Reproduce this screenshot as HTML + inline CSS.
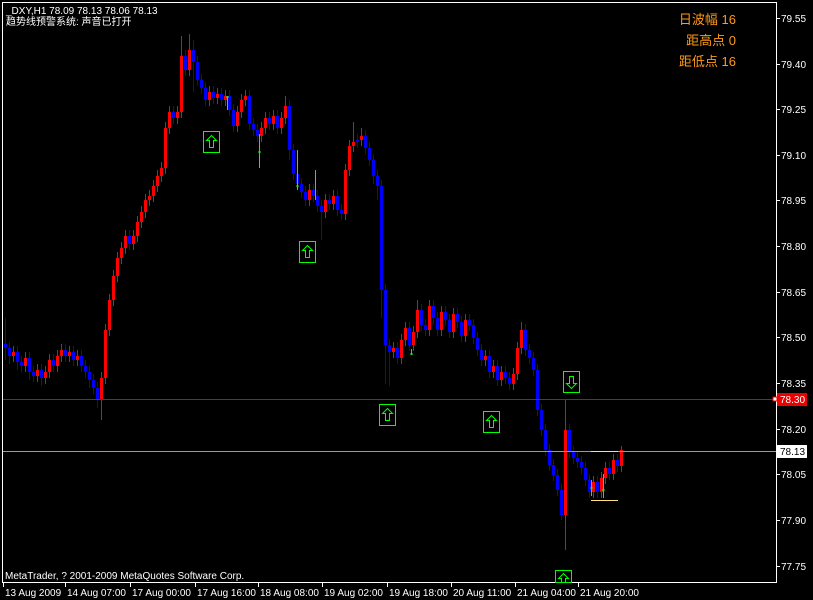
<!DOCTYPE html>
<html><head><meta charset="utf-8"><style>
html,body{margin:0;padding:0;background:#000;width:813px;height:600px;overflow:hidden}
svg{display:block}
text{font-family:"Liberation Sans","Noto Sans CJK SC",sans-serif}
</style></head><body>
<svg width="813" height="600" xmlns="http://www.w3.org/2000/svg">
<rect width="813" height="600" fill="#000"/>
<path fill="none" stroke="#f00" d="M13.5 346V362M25.5 352V372M37.5 364V382M45.5 366V384M49.5 354V378M57.5 350V372M61.5 344V362M69.5 346V362M77.5 350V366M101.5 372V420M105.5 324V384M109.5 294V336M113.5 270V306M117.5 252V282M121.5 242V264M125.5 230V254M133.5 230V250M137.5 216V242M141.5 206V228M145.5 194V218M149.5 190V206M153.5 180V202M157.5 170V192M161.5 162V182M165.5 122V174M169.5 106V134M177.5 106V124M181.5 36V118M189.5 34V76M209.5 86V106M217.5 88V104M225.5 90V106M237.5 106V132M241.5 94V118M245.5 90V106M261.5 122V142M265.5 112V134M273.5 110V130M281.5 112V134M285.5 96V124M309.5 184V206M325.5 194V218M333.5 190V210M345.5 164V220M349.5 140V176M353.5 122V152M361.5 128V146M393.5 342V358M401.5 334V364M405.5 322V346M413.5 326V351M417.5 300V338M429.5 300V336M441.5 306V336M453.5 308V338M465.5 314V342M485.5 350V366M493.5 360V378M501.5 366V386M513.5 368V390M517.5 342V380M521.5 322V354M565.5 400V550M593.5 476V498M601.5 472V498M605.5 462V484M613.5 454V480M621.5 446V472"/>
<path fill="#f00" d="M12 352h3v4h-3zM24 358h3v8h-3zM36 370h3v6h-3zM44 372h3v6h-3zM48 360h3v12h-3zM56 356h3v10h-3zM60 350h3v6h-3zM68 352h3v4h-3zM76 356h3v4h-3zM100 378h3v22h-3zM104 330h3v48h-3zM108 300h3v30h-3zM112 276h3v24h-3zM116 258h3v18h-3zM120 248h3v10h-3zM124 236h3v12h-3zM132 236h3v8h-3zM136 222h3v14h-3zM140 212h3v10h-3zM144 200h3v12h-3zM148 196h3v4h-3zM152 186h3v10h-3zM156 176h3v10h-3zM160 168h3v8h-3zM164 128h3v40h-3zM168 112h3v16h-3zM176 112h3v6h-3zM180 56h3v56h-3zM188 50h3v20h-3zM208 92h3v8h-3zM216 94h3v4h-3zM224 96h3v4h-3zM236 112h3v14h-3zM240 100h3v12h-3zM244 96h3v4h-3zM260 128h3v8h-3zM264 118h3v10h-3zM272 116h3v8h-3zM280 118h3v10h-3zM284 106h3v12h-3zM308 190h3v10h-3zM324 200h3v12h-3zM332 196h3v8h-3zM344 170h3v44h-3zM348 146h3v24h-3zM352 142h3v4h-3zM360 136h3v4h-3zM392 348h3v4h-3zM400 340h3v18h-3zM404 328h3v12h-3zM412 332h3v13h-3zM416 310h3v22h-3zM428 306h3v24h-3zM440 312h3v18h-3zM452 314h3v18h-3zM464 320h3v16h-3zM484 356h3v4h-3zM492 366h3v6h-3zM500 372h3v8h-3zM512 374h3v10h-3zM516 348h3v26h-3zM520 330h3v18h-3zM564 430h3v85h-3zM592 482h3v10h-3zM600 478h3v14h-3zM604 468h3v10h-3zM612 460h3v14h-3zM620 450h3v16h-3z"/>
<path fill="none" stroke="#00f" d="M5.5 318V360M9.5 342V364M17.5 346V370M21.5 356V372M29.5 352V380M33.5 366V382M41.5 364V386M53.5 354V372M65.5 344V362M73.5 346V366M81.5 350V372M85.5 360V378M89.5 366V388M93.5 374V394M97.5 382V408M129.5 230V250M173.5 106V124M185.5 50V76M193.5 40V92M197.5 56V86M201.5 74V94M205.5 82V106M213.5 86V104M221.5 88V106M229.5 90V116M233.5 104V132M249.5 90V130M253.5 118V136M257.5 124V142M269.5 112V130M277.5 110V134M289.5 100V160M293.5 144V180M297.5 168V190M301.5 178V198M305.5 186V206M313.5 184V202M317.5 190V212M321.5 200V240M329.5 194V210M337.5 190V216M341.5 204V220M357.5 134V148M365.5 130V154M369.5 142V166M373.5 154V184M377.5 170V200M381.5 180V318M385.5 284V384M389.5 339V386M397.5 342V364M409.5 322V351M421.5 304V331M425.5 319V336M433.5 300V324M437.5 312V336M445.5 306V326M449.5 314V338M457.5 308V328M461.5 316V342M469.5 314V331M473.5 319V344M477.5 332V356M481.5 344V366M489.5 350V378M497.5 360V386M505.5 366V384M509.5 372V390M525.5 324V356M529.5 344V364M533.5 352V376M537.5 364V416M541.5 404V436M545.5 424V456M549.5 444V471M553.5 459V481M557.5 469V496M561.5 484V520M569.5 424V458M573.5 446V464M577.5 452V468M581.5 456V474M585.5 462V486M589.5 474V498M597.5 476V498M609.5 462V480M617.5 454V472"/>
<path fill="#00f" d="M4 344h3v4h-3zM8 348h3v8h-3zM16 352h3v10h-3zM20 362h3v4h-3zM28 358h3v14h-3zM32 372h3v4h-3zM40 370h3v8h-3zM52 360h3v6h-3zM64 350h3v6h-3zM72 352h3v8h-3zM80 356h3v10h-3zM84 366h3v6h-3zM88 372h3v8h-3zM92 380h3v8h-3zM96 388h3v12h-3zM128 236h3v8h-3zM172 112h3v6h-3zM184 56h3v14h-3zM192 50h3v12h-3zM196 62h3v18h-3zM200 80h3v8h-3zM204 88h3v12h-3zM212 92h3v6h-3zM220 94h3v6h-3zM228 96h3v14h-3zM232 110h3v16h-3zM248 96h3v28h-3zM252 124h3v6h-3zM256 130h3v6h-3zM268 118h3v6h-3zM276 116h3v12h-3zM288 106h3v44h-3zM292 150h3v24h-3zM296 174h3v10h-3zM300 184h3v8h-3zM304 192h3v8h-3zM312 190h3v6h-3zM316 196h3v10h-3zM320 206h3v6h-3zM328 200h3v4h-3zM336 196h3v14h-3zM340 210h3v4h-3zM356 140h3v2h-3zM364 136h3v12h-3zM368 148h3v12h-3zM372 160h3v16h-3zM376 176h3v10h-3zM380 186h3v104h-3zM384 290h3v55h-3zM388 345h3v7h-3zM396 348h3v10h-3zM408 328h3v17h-3zM420 310h3v15h-3zM424 325h3v5h-3zM432 306h3v12h-3zM436 318h3v12h-3zM444 312h3v8h-3zM448 320h3v12h-3zM456 314h3v8h-3zM460 322h3v14h-3zM468 320h3v5h-3zM472 325h3v13h-3zM476 338h3v12h-3zM480 350h3v10h-3zM488 356h3v16h-3zM496 366h3v14h-3zM504 372h3v6h-3zM508 378h3v6h-3zM524 330h3v20h-3zM528 350h3v8h-3zM532 358h3v12h-3zM536 370h3v40h-3zM540 410h3v20h-3zM544 430h3v20h-3zM548 450h3v15h-3zM552 465h3v10h-3zM556 475h3v15h-3zM560 490h3v25h-3zM568 430h3v22h-3zM572 452h3v6h-3zM576 458h3v4h-3zM580 462h3v6h-3zM584 468h3v12h-3zM588 480h3v12h-3zM596 482h3v10h-3zM608 468h3v6h-3zM616 460h3v6h-3z"/>
<path fill="none" stroke="#0f0" d="M227.5 96V110M259.5 134V168M297.5 150V190M315.5 170V200M411.5 349V355M591.5 480V496M603.5 474V498M226 97h3M258 152h3M296 186h3M410 354h3M590 488h3M602 490h3"/>
<line x1="3" y1="399.5" x2="776" y2="399.5" stroke="#d00"/>
<line x1="3" y1="451.5" x2="776" y2="451.5" stroke="#999"/>
<line x1="591" y1="451.5" x2="618" y2="451.5" stroke="#ffe080"/>
<line x1="591" y1="500.5" x2="618" y2="500.5" stroke="#ffe080"/>
<rect x="2.5" y="2.5" width="774" height="580" fill="none" stroke="#fff"/>
<g fill="none" stroke="#0f0">
<rect x="203.5" y="131.5" width="16" height="21"/>
<rect x="299.5" y="241.5" width="16" height="21"/>
<rect x="379.5" y="404.5" width="16" height="21"/>
<rect x="483.5" y="411.5" width="16" height="21"/>
<rect x="563.5" y="371.5" width="16" height="21"/>
<rect x="555.5" y="570.5" width="16" height="12"/>
<path d="M211.5 135.5 l-5 5 h3 v7 h4 v-7 h3 z"/>
<path d="M307.5 245.5 l-5 5 h3 v7 h4 v-7 h3 z"/>
<path d="M387.5 408.5 l-5 5 h3 v7 h4 v-7 h3 z"/>
<path d="M491.5 415.5 l-5 5 h3 v7 h4 v-7 h3 z"/>
<path d="M571.5 388.5 l-5 -5 h3 v-7 h4 v7 h3 z"/>
<path d="M563.5 573.5 l-5 5 h3 v4 h4 v-4 h3 z"/>
</g>
<text x="6" y="14" fill="#fff" font-size="10">_DXY,H1  78.09 78.13 78.06 78.13</text>
<text x="6" y="25" fill="#fff" font-size="10">趋势线预警系统: 声音已打开</text>
<g fill="#ff9a1a" font-size="13" text-anchor="end">
<text x="736" y="24">日波幅 16</text>
<text x="736" y="45">距高点 0</text>
<text x="736" y="66">距低点 16</text>
</g>
<text x="5" y="579" fill="#fff" font-size="10">MetaTrader, ? 2001-2009 MetaQuotes Software Corp.</text>
<g stroke="#fff">
<path d="M776 18.5h4M776 64.5h4M776 109.5h4M776 155.5h4M776 200.5h4M776 246.5h4M776 292.5h4M776 337.5h4M776 383.5h4M776 429.5h4M776 474.5h4M776 520.5h4M776 566.5h4M3.5 582v5M65.5 582v5M130.5 582v5M195.5 582v5M258.5 582v5M322.5 582v5M387.5 582v5M451.5 582v5M515.5 582v5M578.5 582v5"/>
</g>
<g fill="#fff" font-size="10">
<text x="781" y="22">79.55</text><text x="781" y="68">79.40</text><text x="781" y="113">79.25</text><text x="781" y="159">79.10</text><text x="781" y="204">78.95</text><text x="781" y="250">78.80</text><text x="781" y="296">78.65</text><text x="781" y="341">78.50</text><text x="781" y="387">78.35</text><text x="781" y="433">78.20</text><text x="781" y="478">78.05</text><text x="781" y="524">77.90</text><text x="781" y="570">77.75</text>
<text x="5" y="596">13 Aug 2009</text><text x="67" y="596">14 Aug 07:00</text><text x="132" y="596">17 Aug 00:00</text><text x="197" y="596">17 Aug 16:00</text><text x="260" y="596">18 Aug 08:00</text><text x="324" y="596">19 Aug 02:00</text><text x="389" y="596">19 Aug 18:00</text><text x="453" y="596">20 Aug 11:00</text><text x="517" y="596">21 Aug 04:00</text><text x="580" y="596">21 Aug 20:00</text>
</g>
<rect x="777" y="393" width="30" height="13" fill="#e00"/>
<text x="780" y="403" fill="#fff" font-size="10">78.30</text>
<rect x="773" y="397" width="4" height="4" fill="#fff" stroke="#e00"/>
<rect x="777" y="445" width="30" height="13" fill="#fff"/>
<text x="780" y="455" fill="#000" font-size="10">78.13</text>
</svg>
</body></html>
